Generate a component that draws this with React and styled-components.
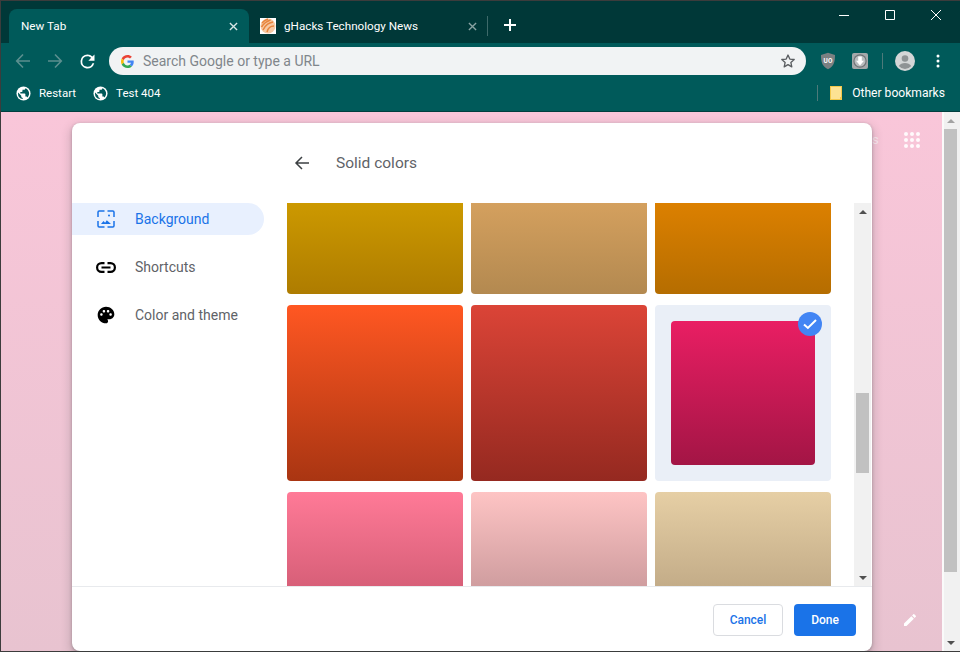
import React from 'react'
import styled, { createGlobalStyle } from 'styled-components'

const Global = createGlobalStyle`
  html, body { margin: 0; padding: 0; height: 652px; overflow: hidden; }
  body { font-family: "Roboto", "Liberation Sans", sans-serif; background: #444; }
  * { box-sizing: border-box; }
`

const Win = styled.div`
  width: 960px;
  height: 652px;
  padding: 1px 0 1px 1px;
  background: #3c3c3c;
  display: flex;
  flex-direction: column;
`

const TitleBar = styled.div`
  height: 42px;
  background: #003838;
  display: flex;
  align-items: flex-end;
  padding-left: 8px;
  flex: none;
`

const Tab = styled.div`
  width: ${p => p.w}px;
  height: 34px;
  display: flex;
  align-items: center;
  flex: none;
  padding: 0 ${p => p.pr}px 0 ${p => p.pl}px;
  color: #fff;
  font: 400 11.7px "Roboto", sans-serif;
  border-radius: 8px 8px 0 0;
  background: ${p => (p.active ? '#005a5a' : 'transparent')};
`

const TabTitle = styled.span`
  flex: 1;
  margin-left: ${p => p.ml || 0}px;
  white-space: nowrap;
`

const Sep = styled.div`
  width: 1px;
  height: ${p => p.h || 20}px;
  background: ${p => p.c || '#3e6a6a'};
  flex: none;
`

const TabSep = styled(Sep)`
  margin-bottom: 7px;
`

const NewTab = styled.div`
  margin: 0 0 8px 16px;
  height: 20px;
  display: flex;
  align-items: center;
`

const WinButtons = styled.div`
  margin: 0 1px 0 auto;
  align-self: flex-start;
  display: flex;
`

const WinBtn = styled.div`
  width: 46px;
  height: 28px;
  display: flex;
  align-items: center;
  justify-content: center;
`

const Toolbar = styled.div`
  height: 37px;
  background: #005a5a;
  display: flex;
  align-items: center;
  padding: 0 0 1px 14px;
  flex: none;
`

const NavIcon = styled.div`
  width: ${p => p.w || 16}px;
  height: ${p => p.w || 16}px;
  margin-right: ${p => p.mr}px;
  display: flex;
  flex: none;
`

const Omnibox = styled.div`
  width: 697px;
  height: 28px;
  margin-left: 11px;
  border-radius: 14px;
  background: #f1f3f4;
  display: flex;
  align-items: center;
  padding: 0 10px 0 12px;
  color: #80868b;
  font: 400 14px "Roboto", sans-serif;
  flex: none;
`

const OmniText = styled.span`
  margin-left: 9px;
  flex: 1;
`

const ExtIcon = styled.div`
  margin-left: ${p => p.ml}px;
  display: flex;
  align-items: center;
  flex: none;
`

const Bookmarks = styled.div`
  height: 32px;
  background: #005a5a;
  border-bottom: 1px solid #013f3f;
  display: flex;
  align-items: center;
  padding: 0 15px 5px 15px;
  color: #fff;
  font: 400 11.5px "Roboto", sans-serif;
  flex: none;
`

const Bookmark = styled.div`
  display: flex;
  align-items: center;
  gap: 8px;
  margin-right: 17px;
  white-space: nowrap;
`

const BookmarkSep = styled(Sep)`
  margin-left: auto;
`

const OtherBookmarks = styled(Bookmark)`
  margin: 0 0 0 12px;
  gap: 10px;
  font-size: 12.1px;
`

const Page = styled.div`
  flex: 1;
  min-height: 0;
  display: flex;
  background: linear-gradient(#f9c6d9, #e8c3d0);
`

const NtpArea = styled.div`
  flex: 1;
  position: relative;
  padding: 11px 0 0 71px;
  min-width: 0;
`

const Dialog = styled.div`
  width: 800px;
  height: 528px;
  background: #fff;
  border-radius: 8px;
  box-shadow: 0 1px 3px rgba(60, 64, 67, 0.35), 0 4px 8px 3px rgba(60, 64, 67, 0.17);
  display: flex;
  flex-direction: column;
  overflow: hidden;
  position: relative;
`

const DialogBody = styled.div`
  flex: 1;
  min-height: 0;
  display: grid;
  grid-template-columns: 215px 1fr;
  grid-template-rows: 80px 1fr;
`

const PanelTitle = styled.div`
  grid-column: 2;
  display: flex;
  align-items: center;
  color: #5f6368;
  font: 400 15.5px "Roboto", sans-serif;
  padding: 0 0 1px 7px;
  gap: 26px;
`

const Sidebar = styled.div`
  grid-column: 1;
  grid-row: 2;
  display: flex;
  flex-direction: column;
  gap: 16px;
`

const NavItem = styled.div`
  width: 192px;
  height: 32px;
  display: flex;
  align-items: center;
  gap: 19px;
  padding-left: 24px;
  border-radius: 0 16px 16px 0;
  background: ${p => (p.active ? '#e8f0fe' : 'transparent')};
  color: ${p => (p.active ? '#1a73e8' : '#5f6368')};
  font: 400 14px "Roboto", sans-serif;
`

const NavGlyph = styled.div`
  width: 20px;
  height: 20px;
  display: flex;
  align-items: center;
  justify-content: center;
  flex: none;
`

const Content = styled.div`
  grid-column: 2;
  grid-row: 2;
  display: flex;
  min-height: 0;
`

const Tiles = styled.div`
  width: 567px;
  display: grid;
  grid-template-columns: repeat(3, 176px);
  grid-template-rows: 91px 176px 95px;
  column-gap: 8px;
  row-gap: 11px;
  overflow: hidden;
`

const Tile = styled.div`
  border-radius: ${p => (p.cut === 'top' ? '0 0 4px 4px' : p.cut === 'bottom' ? '4px 4px 0 0' : '4px')};
  background: linear-gradient(${p => p.from}, ${p => p.to});
`

const SelectedTile = styled.div`
  position: relative;
  padding: 16px;
  border-radius: 4px;
  background: #eaeff7;
`

const SelectedInner = styled.div`
  height: 100%;
  border-radius: 4px;
  background: linear-gradient(${p => p.from}, ${p => p.to});
`

const Check = styled.div`
  position: absolute;
  top: 7px;
  right: 9px;
  width: 24px;
  height: 24px;
  border-radius: 50%;
  background: #4285f4;
  display: flex;
  align-items: center;
  justify-content: center;
`

const Scrollbar = styled.div`
  width: 17px;
  background: #f1f1f1;
  display: flex;
  flex-direction: column;
  align-items: center;
  justify-content: space-between;
  margin-right: 1px;
  flex: none;
`

const ScrollTrack = styled.div`
  flex: 1;
  width: 100%;
  padding: ${p => p.before}px 2px 0;
`

const ScrollThumb = styled.div`
  height: ${p => p.h}px;
  background: #c1c1c1;
`

const ScrollArrow = styled.div`
  width: 100%;
  height: 17px;
  display: flex;
  align-items: center;
  justify-content: center;
  flex: none;
`

const Tri = styled.div`
  width: 0;
  height: 0;
  border-left: 4px solid transparent;
  border-right: 4px solid transparent;
  border-${p => (p.down ? 'top' : 'bottom')}: 4px solid ${p => p.c || '#505050'};
`

const Footer = styled.div`
  height: 65px;
  border-top: 1px solid #e8eaed;
  display: flex;
  align-items: center;
  justify-content: flex-end;
  gap: 11px;
  padding: 1px 16px 0 0;
  flex: none;
`

const Button = styled.div`
  height: 32px;
  border-radius: 4px;
  display: flex;
  align-items: center;
  justify-content: center;
  font: 500 12px "Roboto", sans-serif;
  width: ${p => (p.primary ? 62 : 70)}px;
  background: ${p => (p.primary ? '#1a73e8' : '#fff')};
  color: ${p => (p.primary ? '#fff' : '#1a73e8')};
  border: ${p => (p.primary ? 'none' : '1px solid #dadce0')};
`

const Apps = styled.div`
  position: absolute;
  top: 20px;
  left: 903px;
  display: grid;
  grid-template-columns: repeat(3, 4px);
  gap: 2px;
`

const AppDot = styled.span`
  width: 4px;
  height: 4px;
  border-radius: 50%;
  background: #fff;
  opacity: 0.9;
`

const Pencil = styled.div`
  position: absolute;
  left: 901px;
  bottom: 23px;
  display: flex;
`

const GhostText = styled.span`
  position: absolute;
  left: 871px;
  top: 20px;
  color: #fff;
  opacity: 0.6;
  font: 400 13px "Roboto", sans-serif;
`

const PageScroll = styled.div`
  width: 18px;
  flex: none;
  border-left: 2px solid #fafafa;
  background: #f1f1f1;
  display: flex;
  flex-direction: column;
  padding-right: 2px;
`

const PageThumb = styled.div`
  height: 443px;
  width: 13px;
  background: #c1c1c1;
  margin-bottom: auto;
`

const Back = () => (
  <svg width="16" height="16" viewBox="0 0 16 16" fill="none" stroke="#3c4043" strokeWidth="1.5">
    <path d="M15 8H2M8 2L2 8l6 6" />
  </svg>
)

const NavArrow = ({ d }) => (
  <svg width="16" height="16" viewBox="0 0 16 16" fill="none" stroke="#5b8f8f" strokeWidth="1.6">
    <path d={d} />
  </svg>
)

const Reload = () => (
  <svg width="21" height="21" viewBox="0 0 24 24" fill="#fff">
    <path d="M17.65 6.35A7.96 7.96 0 0 0 12 4a8 8 0 1 0 7.74 10h-2.08A6 6 0 1 1 12 6c1.66 0 3.14.69 4.22 1.78L13 11h7V4l-2.35 2.35z" />
  </svg>
)

const GLogo = () => (
  <svg width="13" height="13" viewBox="0 0 48 48">
    <path fill="#EA4335" d="M24 9.5c3.5 0 6.7 1.2 9.2 3.6l6.9-6.9C35.900 2.400 30.400 0 24 0 14.600 0 6.500 5.400 2.600 13.200l8 6.200C12.500 13.600 17.800 9.500 24 9.500z" />
    <path fill="#4285F4" d="M46.980 24.550c0-1.570-.15-3.090-.38-4.550H24v9.020h12.940c-.58 2.960-2.260 5.480-4.780 7.180l7.730 6c4.510-4.180 7.090-10.360 7.090-17.650z" />
    <path fill="#FBBC05" d="M10.530 28.590c-.48-1.450-.76-2.990-.76-4.590s.27-3.140.76-4.590l-7.980-6.190C.92 16.460 0 20.120 0 24c0 3.880.92 7.540 2.560 10.780l7.970-6.190z" />
    <path fill="#34A853" d="M24 48c6.480 0 11.930-2.130 15.890-5.810l-7.730-6c-2.150 1.450-4.920 2.300-8.160 2.300-6.260 0-11.570-4.220-13.470-9.910l-7.980 6.190C6.510 42.620 14.620 48 24 48z" />
  </svg>
)

const Star = () => (
  <svg width="16" height="16" viewBox="0 0 24 24" fill="none" stroke="#5a5d60" strokeWidth="2" strokeLinejoin="round">
    <path d="M12 3l2.700 6.100 6.600.7-5 4.400 1.400 6.500L12 17.400l-5.700 3.300 1.400-6.500-5-4.400 6.600-.7z" />
  </svg>
)

const Favicon = () => (
  <svg width="16" height="16" viewBox="0 0 16 16" fill="none">
    <rect width="16" height="16" fill="#fff" />
    <circle cx="8" cy="8" r="7.500" fill="#f6c9a4" />
    <path d="M2 5c3-3 4-3 6-4M1.500 9c3-5 6-6 9-7M3 12c3-6 6-7 10-8M7 14c1-4 4-6 7-6" stroke="#e8843c" strokeWidth="1.500" />
  </svg>
)

const Globe = () => (
  <svg width="15" height="15" viewBox="0 0 16 16">
    <circle cx="8" cy="8" r="7.500" fill="#fff" />
    <path fill="#005a5a" d="M7.200 13.900A6 6 0 0 1 2.100 8c0-.4 0-.7.100-1l3.400 3.400v.8c0 .8.700 1.500 1.600 1.500zM12.200 12.200c-.2-.6-.8-1.100-1.400-1.100h-.8V8.700c0-.4-.3-.7-.8-.7H4.600V6.400h1.500c.4 0 .8-.3.800-.8V4.100h1.500c.8 0 1.500-.7 1.500-1.500v-.3a6 6 0 0 1 2.300 9.900z" />
  </svg>
)

const Shield = () => (
  <svg width="16" height="18" viewBox="0 0 16 18">
    <path fill="#7b8082" d="M8 .8l7 2.200c0 6-.6 11-7 14.200C1.600 14 1 9 1 3z" />
    <text x="8" y="10.500" fontSize="6.500" fontWeight="700" fill="#fff" textAnchor="middle" fontFamily="Roboto">UO</text>
  </svg>
)

const Download = () => (
  <svg width="16" height="16" viewBox="0 0 16 16">
    <rect width="16" height="16" rx="2" fill="#a4a8aa" />
    <circle cx="8" cy="8" r="6.700" fill="#6f7376" />
    <circle cx="8" cy="8" r="5.500" fill="#b9bcbe" />
    <path fill="#fff" d="M6.200 3.500h3.600v4.300h2.200L8 12.500 4 7.800h2.200z" />
  </svg>
)

const Avatar = () => (
  <svg width="20" height="20" viewBox="0 0 20 20">
    <circle cx="10" cy="10" r="10" fill="#d4d6d7" />
    <circle cx="10" cy="7.500" r="3.300" fill="#8f9395" />
    <path fill="#8f9395" d="M3.800 15c1.200-2.100 3.600-3 6.200-3s5 .9 6.200 3a8 8 0 0 1-12.400 0z" />
  </svg>
)

const Folder = () => (
  <svg width="12" height="14" viewBox="0 0 12 14">
    <rect width="12" height="14" fill="#f3c84b" />
    <rect x="1" y="1" width="10" height="12" fill="#fde293" />
    <rect x="10" y="11" width="2" height="3" fill="#f3c84b" />
  </svg>
)

const BgIcon = () => (
  <svg width="18" height="18" viewBox="0 0 18 18" fill="none" stroke="#1a73e8" strokeWidth="1.500">
    <path d="M7.500 1H2.200C1.500 1 1 1.500 1 2.200V7M10.500 1h5.300c.7 0 1.200.5 1.200 1.200V7M1 11v4.800c0 .7.500 1.200 1.200 1.200h5.300M17 11v4.800c0 .7-.5 1.200-1.200 1.200h-5.300" />
    <circle cx="12" cy="5.500" r="1" fill="#1a73e8" stroke="none" />
    <path fill="#1a73e8" stroke="none" d="M4 14l2.500-3 1.600 1.800 1.700-2.600L14 14z" />
  </svg>
)

const LinkIcon = () => (
  <svg width="20" height="11" viewBox="0 0 20 11" fill="none" stroke="#000" strokeWidth="2.200">
    <path d="M8.500 1.100H5.500a4.400 4.400 0 0 0 0 8.800h3M11.500 1.100h3a4.400 4.400 0 0 1 0 8.800h-3M5.500 5.500h9" />
  </svg>
)

const Palette = () => (
  <svg width="20" height="20" viewBox="0 0 24 24" fill="#000">
    <path d="M12 2C6.490 2 2 6.490 2 12s4.490 10 10 10c1.380 0 2.500-1.120 2.500-2.500 0-.61-.23-1.200-.64-1.670-.08-.1-.13-.21-.13-.33 0-.28.220-.5.500-.5H16c3.310 0 6-2.690 6-6 0-4.960-4.490-9-10-9zm5.500 11c-.83 0-1.500-.67-1.500-1.500s.670-1.500 1.500-1.500 1.500.67 1.500 1.500-.67 1.500-1.500 1.500zm-3-4c-.83 0-1.500-.67-1.500-1.500S13.670 6 14.500 6s1.500.67 1.500 1.500S15.330 9 14.500 9zM5 11.500c0-.83.670-1.500 1.500-1.500s1.500.67 1.500 1.500S7.330 13 6.500 13 5 12.330 5 11.500zm6-4c0 .83-.67 1.500-1.500 1.500S8 8.330 8 7.500 8.670 6 9.500 6s1.500.67 1.500 1.500z" />
  </svg>
)

const rows = [
  { tiles: [['#cc9900', '#ae7c00'], ['#d4a05e', '#b38950'], ['#dc8000', '#b56d00']] },
  { tiles: [['#ff5722', '#a93512'], ['#db4437', '#952920']] },
  { tiles: [['#ff7a97', '#d75f78'], ['#fec4c4', '#cf9d9f'], ['#e6cfa5', '#c3ac88']] },
]

const App = () => (
  <Win>
    <Global />
    <TitleBar>
      <Tab active w={240} pl={12} pr={11}>
        <TabTitle>New Tab</TabTitle>
        <svg width="9" height="9" viewBox="0 0 10 10" stroke="#d8e6e6" strokeWidth="1.500"><path d="M1 1l8 8M9 1l-8 8" /></svg>
      </Tab>
      <Tab w={238} pl={11} pr={10}>
        <Favicon />
        <TabTitle ml={8}>gHacks Technology News</TabTitle>
        <svg width="9" height="9" viewBox="0 0 10 10" stroke="#8aa3a3" strokeWidth="1.500"><path d="M1 1l8 8M9 1l-8 8" /></svg>
      </Tab>
      <TabSep />
      <NewTab>
        <svg width="12" height="12" viewBox="0 0 12 12" stroke="#fff" strokeWidth="2"><path d="M6 0v12M0 6h12" /></svg>
      </NewTab>
      <WinButtons>
        <WinBtn><svg width="10" height="10" viewBox="0 0 10 10" stroke="#fff"><path d="M0 5.500h10" /></svg></WinBtn>
        <WinBtn><svg width="10" height="10" viewBox="0 0 10 10" stroke="#fff" fill="none"><path d="M.5.500h9v9h-9z" /></svg></WinBtn>
        <WinBtn><svg width="10" height="10" viewBox="0 0 10 10" stroke="#fff"><path d="M0 0l10 10M10 0L0 10" /></svg></WinBtn>
      </WinButtons>
    </TitleBar>
    <Toolbar>
      <NavIcon mr={16}><NavArrow d="M15 8H2M8 1.500L1.700 8 8 14.500" /></NavIcon>
      <NavIcon mr={14}><NavArrow d="M1 8h13M8 1.500L14.300 8 8 14.500" /></NavIcon>
      <NavIcon w={21} mr={0}><Reload /></NavIcon>
      <Omnibox>
        <GLogo />
        <OmniText>Search Google or type a URL</OmniText>
        <Star />
      </Omnibox>
      <ExtIcon ml={14}><Shield /></ExtIcon>
      <ExtIcon ml={16}><Download /></ExtIcon>
      <ExtIcon ml={14}><Sep h={16} c="#4d7a7a" /></ExtIcon>
      <ExtIcon ml={12}><Avatar /></ExtIcon>
      <ExtIcon ml={21}>
        <svg width="4" height="14" viewBox="0 0 4 14" fill="#fff"><circle cx="2" cy="2" r="1.500" /><circle cx="2" cy="7" r="1.500" /><circle cx="2" cy="12" r="1.500" /></svg>
      </ExtIcon>
    </Toolbar>
    <Bookmarks>
      <Bookmark><Globe />Restart</Bookmark>
      <Bookmark><Globe />Test 404</Bookmark>
      <BookmarkSep h={16} c="#4d7a7a" />
      <OtherBookmarks><Folder />Other bookmarks</OtherBookmarks>
    </Bookmarks>
    <Page>
      <NtpArea>
        <GhostText>s</GhostText>
        <Apps>{Array.from({ length: 9 }, (_, i) => <AppDot key={i} />)}</Apps>
        <Pencil>
          <svg width="16" height="16" viewBox="0 0 24 24" fill="#fff"><path d="M3 17.250V21h3.750L17.810 9.940l-3.750-3.750L3 17.250zM20.710 7.040a1 1 0 0 0 0-1.410l-2.340-2.340a1 1 0 0 0-1.410 0l-1.830 1.830 3.750 3.750 1.830-1.830z" /></svg>
        </Pencil>
        <Dialog>
          <DialogBody>
            <PanelTitle>
              <Back />
              Solid colors
            </PanelTitle>
            <Sidebar>
              <NavItem active><NavGlyph><BgIcon /></NavGlyph>Background</NavItem>
              <NavItem><NavGlyph><LinkIcon /></NavGlyph>Shortcuts</NavItem>
              <NavItem><NavGlyph><Palette /></NavGlyph>Color and theme</NavItem>
            </Sidebar>
            <Content>
              <Tiles>
                {rows[0].tiles.map(([from, to]) => <Tile key={from} cut="top" from={from} to={to} />)}
                {rows[1].tiles.map(([from, to]) => <Tile key={from} from={from} to={to} />)}
                <SelectedTile>
                  <SelectedInner from="#e91e63" to="#a31545" />
                  <Check>
                    <svg width="14" height="12" viewBox="0 0 14 12" fill="none" stroke="#fff" strokeWidth="2"><path d="M1 6.500l3.900 3.500L13 2" /></svg>
                  </Check>
                </SelectedTile>
                {rows[2].tiles.map(([from, to]) => <Tile key={from} cut="bottom" from={from} to={to} />)}
              </Tiles>
              <Scrollbar>
                <ScrollArrow><Tri /></ScrollArrow>
                <ScrollTrack before={173}><ScrollThumb h={80} /></ScrollTrack>
                <ScrollArrow><Tri down /></ScrollArrow>
              </Scrollbar>
            </Content>
          </DialogBody>
          <Footer>
            <Button>Cancel</Button>
            <Button primary>Done</Button>
          </Footer>
        </Dialog>
      </NtpArea>
      <PageScroll>
        <ScrollArrow><Tri c="#a3a3a3" /></ScrollArrow>
        <PageThumb />
        <ScrollArrow><Tri down /></ScrollArrow>
      </PageScroll>
    </Page>
  </Win>
)

export default App
